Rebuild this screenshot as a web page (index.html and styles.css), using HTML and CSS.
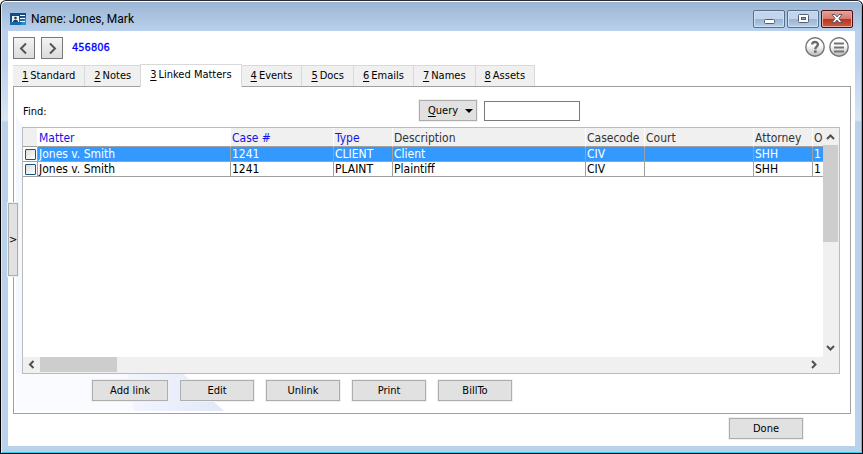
FILE: index.html
```html
<!DOCTYPE html>
<html lang="en">
<head>
    <meta charset="UTF-8">
    <meta name="viewport" content="width=device-width, initial-scale=1.0">
    <title>Name: Jones, Mark</title>
    <link rel="stylesheet" href="styles.css">
</head>
<body>
    <div class="window">
        <!-- Title Bar -->
        <header class="title-bar">
            <svg class="app-icon" width="16" height="12" viewBox="0 0 16 12">
                <rect width="16" height="12" fill="#1569a8"/>
                <path d="M0 0h16v3L0 9z" fill="#0d4f86"/>
                <path d="M10 12l6-7v7z" fill="#2b8fd0"/>
                <rect x="2" y="3" width="7" height="6" fill="#e8f1f8"/>
                <circle cx="5.5" cy="5" r="1.3" fill="#1d3c58"/>
                <path d="M3 9c0-3 5-3 5 0z" fill="#1d3c58"/>
                <path d="M10 2.5h5M10 5.5h5M10 8.5h5" stroke="#fff"/>
            </svg>
            <h1>Name: Jones, Mark</h1>
            <div class="window-controls">
                <button class="control" type="button" aria-label="Minimize">
                    <svg width="12" height="12" viewBox="0 0 12 12"><rect x="1.5" y="6.5" width="10" height="4" rx="1" fill="#fff" stroke="#565d70"/></svg>
                </button>
                <button class="control" type="button" aria-label="Maximize">
                    <svg width="12" height="12" viewBox="0 0 12 12"><rect x="1.5" y="1.5" width="10" height="8" rx="1" fill="#fff" stroke="#565d70"/><rect x="4.5" y="4.5" width="4" height="2" fill="#86a6cc" stroke="#565d70"/></svg>
                </button>
                <button class="control control-close" type="button" aria-label="Close">
                    <svg width="12" height="12" viewBox="0 0 12 12"><path d="M1 1.5h3L6 4l2-2.5h3L7.8 5.5 11 9.5H8L6 7 4 9.5H1l3.2-4z" fill="#fff" stroke="#565d70"/></svg>
                </button>
            </div>
        </header>

        <div class="client">
            <!-- Toolbar -->
            <div class="toolbar">
                <button class="nav-button" type="button" aria-label="Previous">
                    <svg width="20" height="20" viewBox="0 0 20 20"><path d="M12 5.5L7 10.5l5 5" fill="none" stroke="#555" stroke-width="2"/></svg>
                </button>
                <button class="nav-button" type="button" aria-label="Next">
                    <svg width="20" height="20" viewBox="0 0 20 20"><path d="M8 5.5l5 5-5 5" fill="none" stroke="#555" stroke-width="2"/></svg>
                </button>
                <span class="record-id">456806</span>
                <div class="tools">
                    <button class="round-button" type="button" aria-label="Help">
                        <svg width="20" height="20" viewBox="0 0 20 20">
                            <defs>
                                <linearGradient id="metal" x1="0" y1="0" x2="0" y2="1">
                                    <stop offset="0.4" stop-color="#fff"/>
                                    <stop offset="1" stop-color="#b8b8b8"/>
                                </linearGradient>
                            </defs>
                            <circle cx="10" cy="10" r="9.2" fill="url(#metal)" stroke="#757575" stroke-width="1.4"/>
                            <path d="M7.2 7.6C7.2 4.2 12.9 4.2 12.9 7.5c0 2.2-2.6 2.1-2.6 4.7" fill="none" stroke="#6a6a6a" stroke-width="2.4"/>
                            <rect x="9" y="13.4" width="2.6" height="2.4" fill="#6a6a6a"/>
                        </svg>
                    </button>
                    <button class="round-button" type="button" aria-label="Menu">
                        <svg width="20" height="20" viewBox="0 0 20 20">
                            <circle cx="10" cy="10" r="9.2" fill="url(#metal)" stroke="#757575" stroke-width="1.4"/>
                            <path d="M5 6.5h10M5 10.5h10M5 14.5h10" stroke="#757575" stroke-width="1.8"/>
                        </svg>
                    </button>
                </div>
            </div>

            <!-- Tabs -->
            <div class="tabs" role="tablist">
                <button class="tab" type="button" role="tab"><u>1</u> Standard</button>
                <button class="tab" type="button" role="tab"><u>2</u> Notes</button>
                <button class="tab active" type="button" role="tab" aria-selected="true"><u>3</u> Linked Matters</button>
                <button class="tab" type="button" role="tab"><u>4</u> Events</button>
                <button class="tab" type="button" role="tab"><u>5</u> Docs</button>
                <button class="tab" type="button" role="tab"><u>6</u> Emails</button>
                <button class="tab" type="button" role="tab"><u>7</u> Names</button>
                <button class="tab" type="button" role="tab"><u>8</u> Assets</button>
            </div>

            <!-- Linked Matters -->
            <main class="panel">
                <svg class="panel-art" width="220" height="296" viewBox="0 0 220 296">
                    <defs>
                        <linearGradient id="beam">
                            <stop offset="0" stop-color="#f3f6fe"/>
                            <stop offset="1" stop-color="#e2e8f9"/>
                        </linearGradient>
                    </defs>
                    <path d="M0 0l130 296H0z" fill="#fafbff"/>
                    <path d="M0 0l10 18v240H0z" fill="#f5f7ff"/>
                    <path d="M110 256h54l44 40h-90z" fill="url(#beam)"/>
                </svg>
                <button class="side-handle" type="button" aria-label="Expand">&gt;</button>

                <div class="find-bar">
                    <label for="find">Find:</label>
                    <button class="button query" type="button"><span><u>Q</u>uery</span>
                        <svg width="8" height="4" viewBox="0 0 8 4"><path d="M0 0h8L4 4z" fill="#000"/></svg>
                    </button>
                    <input class="find-input" type="text" id="find">
                </div>

                <div class="grid">
                    <div class="grid-view">
                        <table>
                            <colgroup>
                                <col class="col-check">
                                <col class="col-wide">
                                <col class="col-case">
                                <col class="col-small">
                                <col class="col-wide">
                                <col class="col-small">
                                <col class="col-court">
                                <col class="col-small">
                                <col>
                            </colgroup>
                            <thead>
                                <tr>
                                    <th></th>
                                    <th class="sortable sorted">Matter</th>
                                    <th class="sortable">Case #</th>
                                    <th class="sortable">Type</th>
                                    <th>Description</th>
                                    <th>Casecode</th>
                                    <th>Court</th>
                                    <th>Attorney</th>
                                    <th>O</th>
                                </tr>
                            </thead>
                            <tbody>
                                <tr class="selected">
                                    <td class="check"><input type="checkbox" aria-label="Select Client"></td>
                                    <td>Jones v. Smith</td>
                                    <td>1241</td>
                                    <td>CLIENT</td>
                                    <td>Client</td>
                                    <td>CIV</td>
                                    <td></td>
                                    <td>SHH</td>
                                    <td>1</td>
                                </tr>
                                <tr>
                                    <td class="check"><input type="checkbox" aria-label="Select Plaintiff"></td>
                                    <td>Jones v. Smith</td>
                                    <td>1241</td>
                                    <td>PLAINT</td>
                                    <td>Plaintiff</td>
                                    <td>CIV</td>
                                    <td></td>
                                    <td>SHH</td>
                                    <td>1</td>
                                </tr>
                            </tbody>
                        </table>
                    </div>
                    <div class="scroll-v">
                        <svg width="15" height="17" viewBox="0 0 15 17"><path d="M4 11l3.5-3.500L11 11" fill="none" stroke="#505050" stroke-width="2"/></svg>
                        <div class="thumb"></div>
                        <svg class="arrow-end" width="15" height="17" viewBox="0 0 15 17"><path d="M4 6l3.5 3.500L11 6" fill="none" stroke="#505050" stroke-width="2"/></svg>
                    </div>
                    <div class="scroll-h">
                        <svg width="17" height="15" viewBox="0 0 17 15"><path d="M10.500 4L7 7.500l3.500 3.500" fill="none" stroke="#505050" stroke-width="2"/></svg>
                        <div class="thumb"></div>
                        <svg class="arrow-end" width="17" height="15" viewBox="0 0 17 15"><path d="M6 4l3.500 3.500L6 11" fill="none" stroke="#505050" stroke-width="2"/></svg>
                    </div>
                </div>

                <div class="actions">
                    <button class="button wide" type="button">Add link</button>
                    <button class="button" type="button">Edit</button>
                    <button class="button" type="button">Unlink</button>
                    <button class="button" type="button">Print</button>
                    <button class="button" type="button">BillTo</button>
                </div>
            </main>

            <footer class="footer">
                <button class="button" type="button">Done</button>
            </footer>
        </div>
    </div>
</body>
</html>
```

FILE: styles.css
```css
/* General Styles */
* {
    box-sizing: border-box;
}

body {
    margin: 0;
    background-color: #fff;
    color: #000;
    font-family: "DejaVu Sans Condensed", "Noto Sans", sans-serif;
    font-size: 11px;
    line-height: 14px;
}

button {
    margin: 0;
    padding: 0;
    color: #000;
    font: inherit;
}

svg {
    display: block;
    flex: none;
}

u {
    text-underline-offset: 2px;
}

/* Window Frame */
.window {
    display: flex;
    flex-direction: column;
    min-height: 100vh;
    padding: 0 7px;
    padding-bottom: 7px;
    border: 1px solid #000;
    border-top-color: #2b2b33;
    border-radius: 6px 6px 0 0;
    background: linear-gradient(#9ab4d2, #b9d1ec 30px, #b9d1ec 60px, #d8e5f5 119px, #b9d1ea 121px);
    box-shadow: inset 0 1px #fff, inset 1px 0 #dce8f6, inset -1px -1px #2fd0e8;
}

.title-bar {
    display: flex;
    align-items: center;
    height: 30px;
    padding: 6px 2px 0;
}

.title-bar h1 {
    margin: 0 0 0 5px;
    font-family: Roboto, "Noto Sans", sans-serif;
    font-size: 12px;
    font-weight: normal;
}

.window-controls {
    display: flex;
    gap: 2px;
    margin-left: auto;
}

.control {
    display: flex;
    justify-content: center;
    align-items: center;
    width: 32px;
    height: 18px;
    border: 1px solid #56708f;
    border-radius: 2px;
    background: linear-gradient(#c2d5ea 50%, #98b3d2 50%, #b5d0ea);
    box-shadow: inset 0 0 0 1px #cfe0f2;
}

.control-close {
    border-color: #4a0e14;
    background: linear-gradient(#e5a096, #d8796b 50%, #b7321c 50%, #cf5a40);
    box-shadow: inset 0 0 0 1px #e6aaa0;
}

.client {
    display: flex;
    flex: 1;
    flex-direction: column;
    padding: 5px 4px 7px 5px;
    background-color: #fff;
}

/* Toolbar */
.toolbar {
    display: flex;
    align-items: center;
    gap: 6px;
    height: 24px;
}

.nav-button {
    width: 22px;
    height: 22px;
    border: 1px solid #777;
    background: linear-gradient(#f4f4f4, #dcdcdc);
}

.record-id {
    margin-left: 3px;
    color: #00f;
    -webkit-text-stroke: 0.3px #00f;
}

.tools {
    display: flex;
    gap: 4px;
    margin-left: auto;
    padding: 0 2px 3px 0;
}

.round-button {
    border: none;
    background: none;
}

/* Tabs */
.tabs {
    position: relative;
    z-index: 1;
    display: flex;
    align-items: flex-end;
    margin: 4px 0 -1px;
}

.tab {
    display: flex;
    gap: 2px;
    align-items: center;
    height: 21px;
    margin-bottom: 1px;
    padding: 0 9px;
    border: 1px solid #d9d9d9;
    border-width: 1px 1px 0 0;
    background-color: #f0f0f0;
    white-space: nowrap;
}

.tab.active {
    height: 23px;
    margin: 0 0 0 -1px;
    padding-bottom: 2px;
    border-left-width: 1px;
    background-color: #fff;
}

/* Panel */
.panel {
    position: relative;
    display: flex;
    flex: 1;
    flex-direction: column;
    padding: 13px 10px 12px 8px;
    border: 1px solid #a0a0a0;
}

.panel-art {
    position: absolute;
    bottom: 2px;
    left: 2px;
}

.side-handle {
    position: absolute;
    top: 116px;
    left: -6px;
    width: 10px;
    height: 73px;
    border: 1px solid #adadad;
    background-color: #e1e1e1;
    box-shadow: 0 0 0 1px #f0f0f0;
}

.find-bar {
    position: relative;
    display: flex;
    align-items: center;
    margin-bottom: 6px;
}

.find-bar label {
    width: 397px;
    padding: 2px 0 0 1px;
}

.find-input {
    width: 96px;
    height: 20px;
    margin-left: 7px;
    border: 1px solid #7a7a7a;
    font: inherit;
}

.button {
    width: 74px;
    height: 21px;
    border: 1px solid #adadad;
    background-color: #e1e1e1;
    box-shadow: 0 0 0 1px #f0f0f0;
}

.button.wide {
    width: 76px;
}

.button.query {
    display: flex;
    justify-content: space-between;
    align-items: center;
    width: 58px;
    padding: 0 3px 0 8px;
}

/* Grid */
.grid {
    position: relative;
    display: grid;
    flex: 1;
    grid-template-columns: minmax(0, 1fr) 16px;
    grid-template-rows: 1fr 16px;
    border: 1px solid #bbb;
    background-color: #fff;
    font-size: 12px;
}

.grid-view {
    overflow: hidden;
}

table {
    width: 100%;
    border-spacing: 0;
    table-layout: fixed;
}

.col-check {
    width: 15px;
}

.col-wide {
    width: 193px;
}

.col-case {
    width: 103px;
}

.col-small {
    width: 59px;
}

.col-court {
    width: 109px;
}

th, td {
    overflow: hidden;
    height: 15px;
    padding: 0 0 0 1px;
    border: 1px solid #a0a0a0;
    border-width: 0 1px 1px 0;
    text-align: left;
    white-space: nowrap;
}

th {
    height: 19px;
    padding-top: 2px;
    border-right-color: #fff;
    background-color: #f0f0f0;
    color: #333;
    font-weight: normal;
}

th.sortable {
    color: #1414e6;
}

th.sorted {
    background-color: #fff;
}

th:last-child, td:last-child {
    border-right: none;
}

.selected td {
    background-color: #3399ff;
    color: #fff;
}

.selected td.check, td.check {
    background-color: #fff;
}

.check input {
    display: block;
    width: 11px;
    height: 11px;
    margin: 1px;
    border: 1px solid #1c5180;
    border-radius: 1px;
    appearance: none;
    background: linear-gradient(135deg, #dcdcd7, #fff);
}

/* Scroll Bars */
.scroll-v, .scroll-h {
    display: flex;
    background-color: #f0f0f0;
}

.scroll-v {
    flex-direction: column;
}

.scroll-h {
    grid-column: 1 / 3;
    padding-right: 16px;
}

.thumb {
    background-color: #cdcdcd;
}

.scroll-v .thumb {
    width: 15px;
    height: 97px;
}

.scroll-h .thumb {
    width: 77px;
    height: 15px;
}

.scroll-v .arrow-end {
    margin-top: auto;
}

.scroll-h .arrow-end {
    margin-left: auto;
}

/* Buttons */
.actions {
    position: relative;
    display: flex;
    gap: 12px;
    margin: 6px 0 0 70px;
}

.footer {
    display: flex;
    justify-content: flex-end;
    padding: 4px 48px 0 0;
}
```
